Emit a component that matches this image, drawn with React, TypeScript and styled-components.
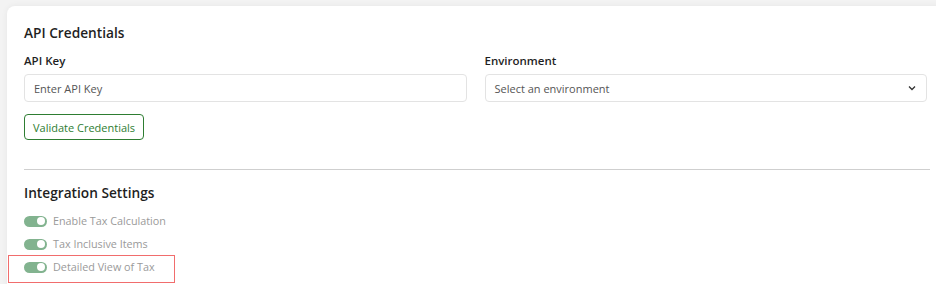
import React from "react";
import styled, { createGlobalStyle } from "styled-components";

const Global = createGlobalStyle`
  html, body { margin: 0; padding: 0; }
  body {
    background: #f3f3f3;
    font-family: "Open Sans", "Noto Sans", sans-serif;
    overflow: hidden;
  }
  * { box-sizing: border-box; }
`;

const Page = styled.div`
  padding: 6px 0 0 7px;
  width: 960px;
  height: 284px;
  overflow: hidden;
`;

const Card = styled.div`
  background: #fff;
  border-radius: 8px;
  box-shadow: 0 0 6px rgba(0, 0, 0, 0.06);
  padding: 17px 25px 16px 17px;
  width: 946px;
  height: 300px;
`;

const Section = styled.section`
  display: flex;
  flex-direction: column;
  align-items: flex-start;
`;

const Title = styled.h2`
  margin: 0;
  font-size: 13.7px;
  font-weight: 600;
  color: #1f1f1f;
  line-height: 20px;
`;

const FieldGrid = styled.div`
  display: grid;
  grid-template-columns: 1fr 1fr;
  column-gap: 18px;
  width: 903px;
  margin-top: 10px;
`;

const Field = styled.div`
  display: flex;
  flex-direction: column;
  gap: 6px;
`;

const Label = styled.label`
  font-size: 11.5px;
  font-weight: 600;
  color: #1f1f1f;
  line-height: 15px;
`;

const Input = styled.div`
  height: 28px;
  border: 1px solid #e3e3e3;
  border-radius: 4px;
  display: flex;
  align-items: center;
  justify-content: space-between;
  padding: 0 9px 0 9px;
  font-size: 11px;
  color: #555;
`;

const Chevron = styled.svg`
  width: 10px;
  height: 10px;
`;

const OutlineButton = styled.button`
  margin-top: 12px;
  height: 26px;
  padding: 0 8px;
  background: #fff;
  border: 1px solid #2e7d32;
  border-radius: 4px;
  color: #2e7d32;
  font-family: inherit;
  font-size: 11px;
`;

const Divider = styled.hr`
  border: none;
  border-top: 1px solid #cfcfcf;
  margin: 29px 0 13px;
  width: 906px;
`;

const ToggleList = styled.div`
  display: flex;
  flex-direction: column;
  gap: 7px;
  margin-top: 10px;
`;

const Row = styled.div<{ $highlight?: boolean }>`
  position: relative;
  display: flex;
  align-items: center;
  gap: 6px;
  height: 16px;
  ${(p) =>
    p.$highlight &&
    `
    &::after {
      content: "";
      position: absolute;
      left: -16px;
      top: -4px;
      width: 165px;
      height: 26px;
      border: 1.5px solid rgba(236, 60, 60, 0.75);
    }
  `}
`;

const Switch = styled.span`
  position: relative;
  width: 23px;
  height: 11px;
  border-radius: 6px;
  background: #82b38f;
  flex-shrink: 0;
  &::after {
    content: "";
    position: absolute;
    right: 2px;
    top: 1.5px;
    width: 8px;
    height: 8px;
    border-radius: 50%;
    background: #fff;
  }
`;

const ToggleText = styled.span`
  font-size: 10.8px;
  color: #9a9a9a;
  line-height: 16px;
`;

const toggles = [
  { label: "Enable Tax Calculation" },
  { label: "Tax Inclusive Items" },
  { label: "Detailed View of Tax", highlight: true },
];

export default function App() {
  return (
    <>
      <Global />
      <Page>
        <Card>
          <Section>
            <Title>API Credentials</Title>
            <FieldGrid>
              <Field>
                <Label>API Key</Label>
                <Input>Enter API Key</Input>
              </Field>
              <Field>
                <Label>Environment</Label>
                <Input>
                  Select an environment
                  <Chevron viewBox="0 0 10 10" fill="none">
                    <path d="M2 3.5 L5 6.5 L8 3.5" stroke="#333" strokeWidth="1.3" />
                  </Chevron>
                </Input>
              </Field>
            </FieldGrid>
            <OutlineButton>Validate Credentials</OutlineButton>
          </Section>
          <Divider />
          <Section>
            <Title>Integration Settings</Title>
            <ToggleList>
              {toggles.map((t) => (
                <Row key={t.label} $highlight={t.highlight}>
                  <Switch />
                  <ToggleText>{t.label}</ToggleText>
                </Row>
              ))}
            </ToggleList>
          </Section>
        </Card>
      </Page>
    </>
  );
}
